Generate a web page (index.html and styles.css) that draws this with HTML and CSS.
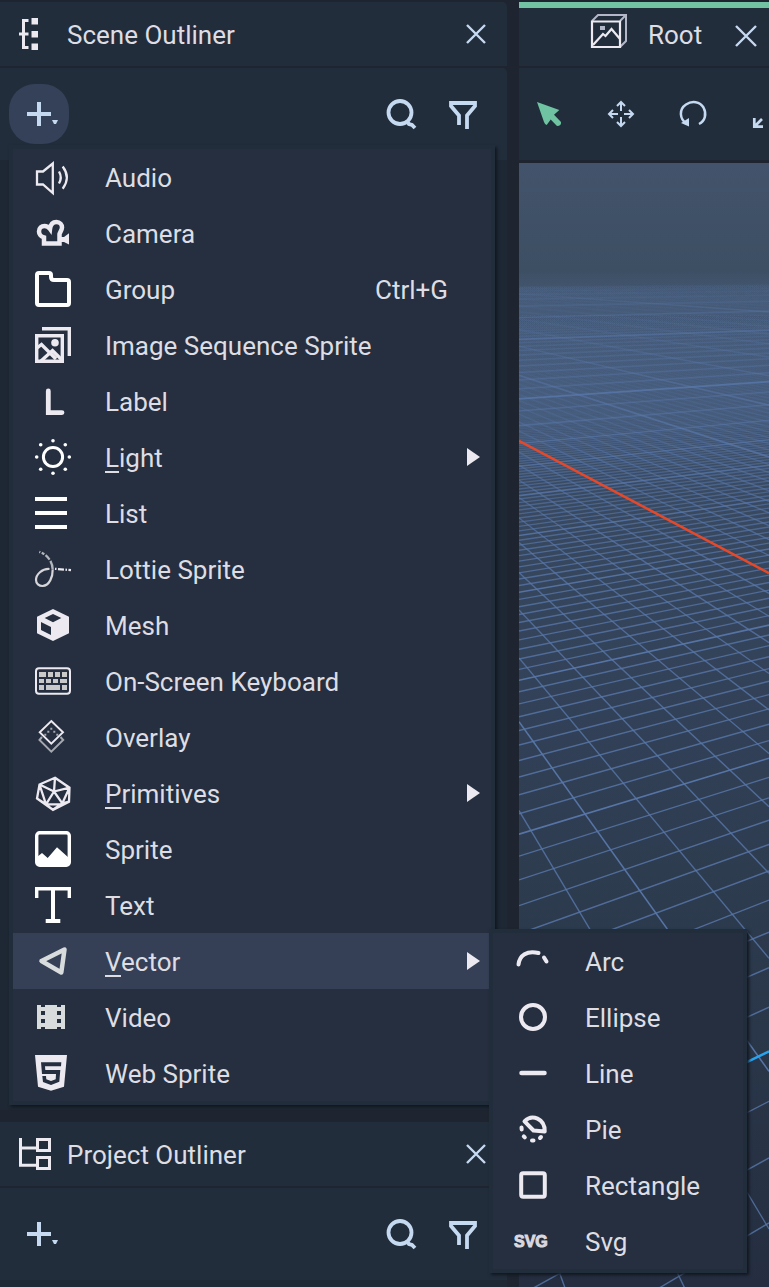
FILE: index.html
```html
<!DOCTYPE html>
<html lang="en">
<head>
<meta charset="utf-8">
<title>Scene Editor</title>
<link rel="stylesheet" href="styles.css">
</head>
<body>
<div class="workspace">
  <div class="sidebar">
    <section class="panel panel-scene">
      <header class="panel-header">
        <svg class="panel-icon" viewBox="0 0 32 32" aria-hidden="true"><path d="M9.500 2.500H4.500V29.500H9.500M0 16H9.500" fill="none" stroke="currentColor" stroke-width="3"/><path d="M12.500 0h6.500v6.500h-6.500zM12.500 13h6.500v6.500h-6.500zM12.500 25.500h6.500v6.500h-6.500z" fill="currentColor"/></svg>
        <h2 class="panel-title">Scene Outliner</h2>
        <button class="close" aria-label="Close Scene Outliner"><svg class="icon-close" viewBox="0 0 20 20"><path d="M1 1L19 19M19 1L1 19"/></svg></button>
      </header>
      <div class="toolbar">
        <button class="tool tool-open" aria-label="Add" aria-expanded="true"><svg class="icon-add" viewBox="0 0 36 36"><path d="M6 18H30M18 6V30" fill="none" stroke="currentColor" stroke-width="4"/><path d="M31 24h6l-2 4h-2z" fill="currentColor"/></svg></button>
        <span class="spacer"></span>
        <button class="tool" aria-label="Search"><svg class="icon-tool" viewBox="0 0 30 30"><circle cx="14" cy="13.500" r="11.500"/><path d="M20.500 22L23 25L26 26L29 29"/></svg></button>
        <button class="tool" aria-label="Filter"><svg class="icon-tool" viewBox="-1 -2 30 30"><path d="M10 24V14.500L2 5V2H26V5L18 14.500V28"/></svg></button>
      </div>
      <div class="tree"></div>
      <ul class="menu" role="menu">
        <li class="menu-row"><button class="item" role="menuitem"><svg class="icon thin" viewBox="0 0 36 36"><path d="M2 12.500V25.500H8L17.800 34V4.500L8 12.500ZM24 12.500Q27.500 18.500 24 24.500M27.700 7.500Q36 18.500 27.700 29.700"/></svg><span>Audio</span></button></li>
        <li class="menu-row"><button class="item" role="menuitem"><svg class="icon" viewBox="0 0 36 36"><path d="M9 28.500V22.500C5.500 21.500 4 18.500 4 16.500C4 13 6.500 11 9.500 11C12 11 13.500 12 15 14C15.500 9.500 18 7 21.500 7C25 7 27 10 27 12.500C27 15 25 17 24.500 19V28.500Z" stroke-width="4.500"/><path class="fill" d="M26 22L29 22L34 18.300V29.500L29 27L26 27Z"/></svg><span>Camera</span></button></li>
        <li class="menu-row"><button class="item" role="menuitem"><svg class="icon white" viewBox="0 0 36 36"><path d="M4 2H14Q16 2 16 4V6Q16 9 19 9H32Q34 9 34 11V32Q34 34 32 34H4Q2 34 2 32V4Q2 2 4 2Z"/></svg><span>Group</span><kbd class="shortcut">Ctrl+G</kbd></button></li>
        <li class="menu-row"><button class="item" role="menuitem"><svg class="icon" viewBox="0 0 36 36"><g stroke-width="3.400"><path d="M7 1.700H34.300V29M1.700 8.700H27.300V34.300H1.700Z"/><path d="M2 21L6.500 17.500L21 32M6 34L17.500 23.500L27 33"/></g><circle class="fill" cx="20" cy="15.700" r="3.800"/></svg><span>Image Sequence Sprite</span></button></li>
        <li class="menu-row"><button class="item" role="menuitem"><svg class="icon" viewBox="0 0 36 36"><path d="M13.300 8V29.600H27" stroke-width="4.800" stroke-linecap="round"/></svg><span>Label</span></button></li>
        <li class="menu-row"><button class="item" role="menuitem" aria-haspopup="true"><svg class="icon white" viewBox="0 0 36 36"><circle cx="18" cy="18" r="9.600" stroke-width="3"/><g class="fill"><circle cx="18" cy="1.700" r="1.800"/><circle cx="18" cy="34.300" r="1.800"/><circle cx="1.700" cy="18" r="1.800"/><circle cx="34.300" cy="18" r="1.800"/><circle cx="5.700" cy="5.700" r="1.800"/><circle cx="30.300" cy="5.700" r="1.800"/><circle cx="5.700" cy="30.300" r="1.800"/><circle cx="30.300" cy="30.300" r="1.800"/></g></svg><span><u>L</u>ight</span><svg class="arrow" viewBox="0 0 13 18"><path d="M0 0L13 9L0 18Z"/></svg></button></li>
        <li class="menu-row"><button class="item" role="menuitem"><svg class="icon white" viewBox="0 0 36 36"><path d="M0 4H32M0 18H32M0 32H32"/></svg><span>List</span></button></li>
        <li class="menu-row"><button class="item" role="menuitem"><svg class="icon" viewBox="0 0 36 36"><path d="M14.500 18C7 17.500 1 23.500 1 29C1 32.500 4 35 7.500 35C14.500 34.500 17.800 26 17.700 18.500" stroke="#d5d5da" stroke-width="2.200"/><path d="M17.700 18.500C17.500 10 12 3.500 4.300 0.800" stroke="#b4b6bd" stroke-width="2.300" stroke-dasharray="9 1.500 6 1.500 3 1.500"/><path d="M20 17.800L36 19.200" stroke-width="2.300" stroke-dasharray="1.500 1.500 6 1.500"/></svg><span>Lottie Sprite</span></button></li>
        <li class="menu-row"><button class="item" role="menuitem"><svg class="icon" viewBox="0 0 36 36"><path class="fill" fill-rule="evenodd" d="M18 2L34 9.700V26.300L18 34L2 26.300V9.700ZM18 7L9.700 11L18 15.300L26.300 11ZM6 15V23L16 28V20Z"/></svg><span>Mesh</span></button></li>
        <li class="menu-row"><button class="item" role="menuitem"><svg class="icon" viewBox="0 0 36 36"><rect x="1" y="5.300" width="34" height="25.400" rx="3" stroke-width="2"/><path fill="#c8c9c8" stroke="none" d="M4 9h7v5H4zM13 9h5v5h-5zM20 9h5v5h-5zM27 9h5v5h-5zM4 16h5v4H4zM11 16h5v4h-5zM18 16h5v4h-5zM25 16h7v4h-7zM4 22h5v5H4zM11 22h14v5H11zM27 22h5v5h-5z"/></svg><span>On-Screen Keyboard</span></button></li>
        <li class="menu-row"><button class="item" role="menuitem"><svg class="icon" viewBox="0 0 36 36"><path d="M7 18L4.500 21L16.300 32.700L28.200 21L25.500 18" stroke="#a5a8af" stroke-width="2"/><path d="M16.300 2L28 13.300L16.300 24.700L4.700 13.300Z" stroke-width="1.900"/><path fill="#a5a8af" stroke="none" d="M15.300 8.700h2v2h-2zM12.300 11.700h2v2h-2zM18.300 11.700h2v2h-2zM9.300 14.700h2v2h-2zM21.300 14.700h2v2h-2z"/></svg><span>Overlay</span></button></li>
        <li class="menu-row"><button class="item" role="menuitem" aria-haspopup="true"><svg class="icon thin" viewBox="0 0 36 36"><path d="M20 2.700L34.500 12.700L34 26.700L18 34.800L2 23.500L4.500 9.500ZM19 16.500L20 2.700M19 16.500L4.500 9.500M19 16.500L34.500 12.700M19 16.500L11 29.300M19 16.500L27.300 28.300M11 29.300H27.300M4.500 9.500L11 29.300M34.500 12.700L27.300 28.300L34 26.700M11 29.300L2 23.500M11 29.300L18 34.800L27.300 28.300"/></svg><span><u>P</u>rimitives</span><svg class="arrow" viewBox="0 0 13 18"><path d="M0 0L13 9L0 18Z"/></svg></button></li>
        <li class="menu-row"><button class="item" role="menuitem"><svg class="icon white" viewBox="0 0 36 36"><rect x="1.700" y="1.700" width="32.600" height="32.600" rx="3" stroke-width="3.400"/><path class="fill" d="M2 26L7 22L12.700 27L22 16.300L34 27V34H2Z"/></svg><span>Sprite</span></button></li>
        <li class="menu-row"><button class="item" role="menuitem"><svg class="icon white" viewBox="0 0 36 36"><path d="M1.700 11V1.700H34.300V11" stroke-width="3.400"/><path d="M18 2V34M10.700 34H25.300"/></svg><span>Text</span></button></li>
        <li class="menu-row">
          <button class="item item-active" role="menuitem" aria-haspopup="true" aria-expanded="true"><svg class="icon soft" viewBox="0 0 36 36"><path d="M6.500 18L29.500 6.500L26.300 29.500Z" stroke-linejoin="round" stroke-width="4.500"/></svg><span><u>V</u>ector</span><svg class="arrow" viewBox="0 0 13 18"><path d="M0 0L13 9L0 18Z"/></svg></button>
          <ul class="menu submenu" role="menu">
            <li class="menu-row"><button class="item" role="menuitem"><svg class="icon" viewBox="0 0 36 36"><path d="M3.500 21.500C4.500 12.500 12 7 23.500 10M29 14.500L31.500 18.500" stroke-linecap="round"/></svg><span>Arc</span></button></li>
            <li class="menu-row"><button class="item" role="menuitem"><svg class="icon" viewBox="0 0 36 36"><circle cx="18" cy="18" r="12"/></svg><span>Ellipse</span></button></li>
            <li class="menu-row"><button class="item" role="menuitem"><svg class="icon" viewBox="0 0 36 36"><path d="M6.500 18H29.500" stroke-width="4.500" stroke-linecap="round"/></svg><span>Line</span></button></li>
            <li class="menu-row"><button class="item" role="menuitem"><svg class="icon" viewBox="0 0 36 36"><path d="M9.500 10.300C17 2.500 30 7.500 29.700 20.500L18.500 19.500Z" stroke-linejoin="round"/><path d="M6.500 16.500L6.700 18.500M8.800 25.300L9.800 26.300M17 29.500H18.500M25 27L26 26" stroke-linecap="round"/></svg><span>Pie</span></button></li>
            <li class="menu-row"><button class="item" role="menuitem"><svg class="icon" viewBox="0 0 36 36"><rect x="6.200" y="6.200" width="23.600" height="23.600" rx="2"/></svg><span>Rectangle</span></button></li>
            <li class="menu-row"><button class="item" role="menuitem"><svg class="icon" viewBox="0 0 36 36" aria-hidden="true"><text class="svg-mark" x="-1" y="24">SVG</text></svg><span>Svg</span></button></li>
          </ul>
        </li>
        <li class="menu-row"><button class="item" role="menuitem"><svg class="icon soft" viewBox="0 0 36 36"><path class="fill" fill-rule="evenodd" d="M2 6H30V30H2ZM6 6V8H10V6ZM6 12V16H10V12ZM6 20V24H10V20ZM6 28V30H10V28ZM22 6V8H26V6ZM22 12V16H26V12ZM22 20V24H26V20ZM22 28V30H26V28Z"/></svg><span>Video</span></button></li>
        <li class="menu-row"><button class="item" role="menuitem"><svg class="icon" viewBox="0 0 36 36"><path class="fill" fill-rule="evenodd" d="M0 0H32L29 31.700L16 35.700L3 31.700ZM6 7.300L7 19H21L20.700 24.300L16 26L11.300 24.300L11 21H7.300L8 27L16 30L24.300 26.700L25.300 15H10.300L10 11.300H26L26.300 7.300Z"/></svg><span>Web Sprite</span></button></li>
      </ul>
    </section>
    <section class="panel panel-project">
      <header class="panel-header">
        <svg class="panel-icon" viewBox="0 0 32 32" aria-hidden="true"><path d="M1.500 0V27.200H18M1.500 10H18M18.500 1.500H30.500V12.500H18.500ZM18.500 19.500H30.500V30.500H18.500Z" fill="none" stroke="currentColor" stroke-width="3"/></svg>
        <h2 class="panel-title">Project Outliner</h2>
        <button class="close" aria-label="Close Project Outliner"><svg class="icon-close" viewBox="0 0 20 20"><path d="M1 1L19 19M19 1L1 19"/></svg></button>
      </header>
      <div class="toolbar">
        <button class="tool" aria-label="Add"><svg class="icon-add" viewBox="0 0 36 36"><path d="M6 18H30M18 6V30" fill="none" stroke="currentColor" stroke-width="4"/><path d="M31 24h6l-2 4h-2z" fill="currentColor"/></svg></button>
        <span class="spacer"></span>
        <button class="tool" aria-label="Search"><svg class="icon-tool" viewBox="0 0 30 30"><circle cx="14" cy="13.500" r="11.500"/><path d="M20.500 22L23 25L26 26L29 29"/></svg></button>
        <button class="tool" aria-label="Filter"><svg class="icon-tool" viewBox="-1 -2 30 30"><path d="M10 24V14.500L2 5V2H26V5L18 14.500V28"/></svg></button>
      </div>
      <div class="tree"></div>
    </section>
  </div>
  <main class="stage">
    <div class="tab">
      <svg class="tab-icon" viewBox="0 0 36 34" aria-hidden="true"><path d="M1 7L7 1H35V27L29 33M29 7L35 1" fill="none" stroke="#b4b6ca" stroke-width="2"/><rect x="9" y="12" width="5" height="4" fill="#b4b6ca"/><path d="M1 7.500H29V33H1ZM2 31L12 20L14.500 22L20.500 15L29 25" fill="none" stroke="#ece9f0" stroke-width="2.200"/></svg>
      <h1 class="panel-title">Root</h1>
      <button class="close close-tab" aria-label="Close Root"><svg class="icon-close-tab" viewBox="0 0 22 22"><path d="M1 1L21 21M21 1L1 21"/></svg></button>
    </div>
    <div class="toolbar stage-tools">
      <button class="tool tool-select" aria-label="Select"><svg class="icon-stage" viewBox="0 0 24 24"><path fill="currentColor" d="M0 0L22.300 8L17 12.700L24 20Q24.500 24 20 24L13.700 17.500L9.700 23Q8 23 7 20Z"/></svg></button>
      <button class="tool" aria-label="Move"><svg class="icon-stage line" viewBox="0 0 24 24"><path d="M12 0V9M12 15V24M0 12H9M15 12H24M8 4L12 0L16 4M8 20L12 24L16 20M4 8L0 12L4 16M20 8L24 12L20 16"/></svg></button>
      <button class="tool" aria-label="Rotate"><svg class="icon-stage line" viewBox="0 0 24 24"><path d="M6 22C-2 17 -2 7 5 2.500C11 -1.500 19 -0.500 22.500 5.500C26 12 24 19 18 22" stroke-width="2.500"/><path d="M8 16V24.500L0 21Z" fill="currentColor" stroke="none"/></svg></button>
      <button class="tool" aria-label="Scale"><svg class="icon-stage line" viewBox="0 0 24 24"><path d="M1.300 16V24.700H10M1.300 24.700L9 17" stroke-width="2.700"/><path d="M16 1.300H24V9M24 1.300L20 5" stroke-width="2.700"/></svg></button>
    </div>
    <div class="viewport"><canvas class="grid" aria-label="3D scene grid"></canvas></div>
  </main>
</div>
<script src="grid.js"></script>
</body>
</html>
```

FILE: styles.css
```css
* {
  box-sizing: border-box;
}

body {
  margin: 0;
  background: #1f2530;
  color: #dddde3;
  font-family: Roboto, "Liberation Sans", sans-serif;
  font-size: 26px;
  line-height: 32px;
  overflow: hidden;
}

button {
  margin: 0;
  padding: 0;
  border: 0;
  background: none;
  color: inherit;
  font: inherit;
}

svg {
  display: block;
  flex: none;
  overflow: visible;
}

.workspace {
  display: grid;
  grid-template-columns: minmax(507px, 65%) minmax(0, 1fr);
  column-gap: 12px;
  height: 100vh;
  padding-top: 2px;
}

.sidebar {
  display: flex;
  flex-direction: column;
  gap: 12px;
  min-height: 0;
}

.panel {
  position: relative;
  display: flex;
  flex-direction: column;
}

.panel-scene {
  flex: 1;
  z-index: 1;
}

.panel-header {
  display: flex;
  align-items: center;
  gap: 16px;
  height: 64px;
  padding: 0 21px 0 19px;
  border-radius: 0 5px 0 0;
  background: #222d3c;
}

.panel-icon {
  width: 32px;
  height: 32px;
  color: #ece9f0;
}

.panel-title {
  margin: 0;
  padding-top: 2px;
  font-size: 26px;
  font-weight: 400;
  line-height: 32px;
}

.close {
  margin-left: auto;
  color: #c5d9f1;
}

.icon-close {
  width: 20px;
  height: 20px;
}

.icon-close path,
.icon-close-tab path {
  fill: none;
  stroke: currentColor;
  stroke-width: 2.4;
}

.toolbar {
  display: flex;
  align-items: center;
  gap: 2px;
  height: 92px;
  margin-top: 2px;
  padding: 0 14px 0 9px;
  border-radius: 0 5px 0 0;
  background: #222d3c;
}

.tool {
  display: grid;
  place-items: center;
  flex: none;
  width: 60px;
  height: 60px;
  border-radius: 26px;
  color: #c5d9f1;
}

.tool-open {
  background: #354158;
}

.spacer {
  flex: 1;
}

.icon-add {
  width: 36px;
  height: 36px;
}

.icon-tool {
  width: 30px;
  height: 30px;
  fill: none;
  stroke: currentColor;
  stroke-width: 3.8;
}

.tree {
  flex: 1;
  min-height: 7px;
  background: #1d2834;
}

.menu {
  position: absolute;
  z-index: 2;
  top: 143px;
  left: 9px;
  width: 486px;
  margin: 0;
  padding: 4px;
  list-style: none;
  background: #222d3b;
  box-shadow: 2px 2px 3px #10161e;
}

.menu-row {
  position: relative;
  background: #252f3f;
}

.item {
  display: flex;
  align-items: center;
  gap: 34px;
  width: 100%;
  height: 56px;
  padding: 0 11px 0 22px;
  text-align: left;
  white-space: nowrap;
}

.item span,
.shortcut {
  padding-top: 2px;
}

.item-active {
  background: linear-gradient(90deg, #354057 476px, transparent 476px);
}

.item u {
  text-decoration-thickness: 2px;
  text-underline-offset: 4px;
}

.submenu {
  top: -4px;
  left: 476px;
  width: 258px;
}

.icon {
  width: 36px;
  height: 36px;
  color: #ece9f0;
  fill: none;
  stroke: currentColor;
  stroke-width: 4;
}

.icon.white {
  color: #ffffff;
}

.icon.soft {
  color: #d9dcdd;
}

.icon.thin {
  stroke-width: 2.3;
}

.icon .fill {
  fill: currentColor;
  stroke: none;
}

.svg-mark {
  fill: #d9d8df;
  stroke: #d9d8df;
  stroke-width: 1;
  font: 700 16px "Liberation Sans", sans-serif;
}

.shortcut {
  margin-left: auto;
  margin-right: 32px;
  font: inherit;
}

.arrow {
  width: 13px;
  height: 18px;
  margin-left: auto;
  fill: #ece9f0;
}

.stage {
  display: flex;
  flex-direction: column;
  min-width: 0;
  overflow: hidden;
}

.tab {
  display: flex;
  align-items: center;
  height: 64px;
  padding-left: 72px;
  border-top: 6px solid #71c3a3;
  background: #222d3c;
}

.tab-icon {
  width: 36px;
  height: 34px;
  margin-right: 21px;
  margin-bottom: 12px;
}

.tab .panel-title {
  margin-bottom: 6px;
}

.close-tab {
  margin-left: 33px;
  margin-bottom: 2px;
}

.icon-close-tab {
  width: 22px;
  height: 22px;
}

.stage-tools {
  gap: 12px;
  padding: 0;
  border-radius: 0;
}

.tool-select {
  color: #6fc3a2;
}

.icon-stage {
  width: 24px;
  height: 24px;
}

.icon-stage.line {
  fill: none;
  stroke: currentColor;
  stroke-width: 2;
}

.viewport {
  position: relative;
  flex: 1;
  min-height: 0;
  margin-top: 3px;
  background: linear-gradient(#42536b 0, #3d4f63 107px, #3f5167 140px, #3b4c63 280px, #35455c 430px, #314056 580px, #2d3b4e 740px, #242e40 1124px);
}

.grid {
  position: absolute;
  inset: 0;
  width: 100%;
  height: 100%;
}
```

FILE: grid.js
```js
// Ground plane seen in perspective: both line families run to points on the horizon.
const canvas = document.querySelector(".grid");
const ctx = canvas.getContext("2d");
const HORIZON = 107;

function fade(rgb, stops) {
  const g = ctx.createLinearGradient(0, 0, 0, 1000);
  for (const [y, a] of stops) g.addColorStop(y / 1000, `rgba(${rgb},${a})`);
  return g;
}

function line(y0, y1, style, width) {
  ctx.strokeStyle = style;
  ctx.lineWidth = width;
  ctx.beginPath();
  ctx.moveTo(0, y0);
  ctx.lineTo(canvas.width, y1);
  ctx.stroke();
}

function draw() {
  const w = canvas.width = canvas.clientWidth;
  canvas.height = canvas.clientHeight;

  const minor = fade("88,119,170", [[150, 0], [200, 0.06], [240, 0.22], [300, 0.5], [400, 0.74], [600, 0.82]]);
  const major = fade("88,119,170", [[118, 0], [150, 0.1], [200, 0.4], [280, 0.75], [500, 0.95]]);
  const main = fade("88,119,170", [[118, 0], [150, 0.4], [200, 0.8], [300, 0.95]]);
  const haze = fade("80,104,142", [[106, 0], [128, 0.25], [200, 0.34], [270, 0.2], [330, 0]]);
  ctx.fillStyle = haze;
  ctx.fillRect(0, 0, w, 330);

  const across = k => [HORIZON + 1504 / (1.666 + k / 10), HORIZON + (1504 - 0.809 * w) / (1.666 + k / 10)];
  const along = k => [HORIZON + 323 / (1.89 + k * 0.1175), HORIZON + (323 + w) / (1.89 + k * 0.1175)];

  for (let k = -15; k < 900; k++) {
    const whole = k % 10 === 0;
    if (k === 0 || (!whole && k > 330)) continue;
    const style = k % 100 === 0 ? main : whole ? major : minor;
    const width = whole ? 1.6 : 1.4;
    line(...across(k), style, width);
    if (!whole || k <= 150) line(...along(k), style, width);
  }

  line(...across(0), "#28a4ee", 2.5);
  line(...along(0), "#e5492a", 2.5);
}

draw();
window.addEventListener("resize", draw);
```
